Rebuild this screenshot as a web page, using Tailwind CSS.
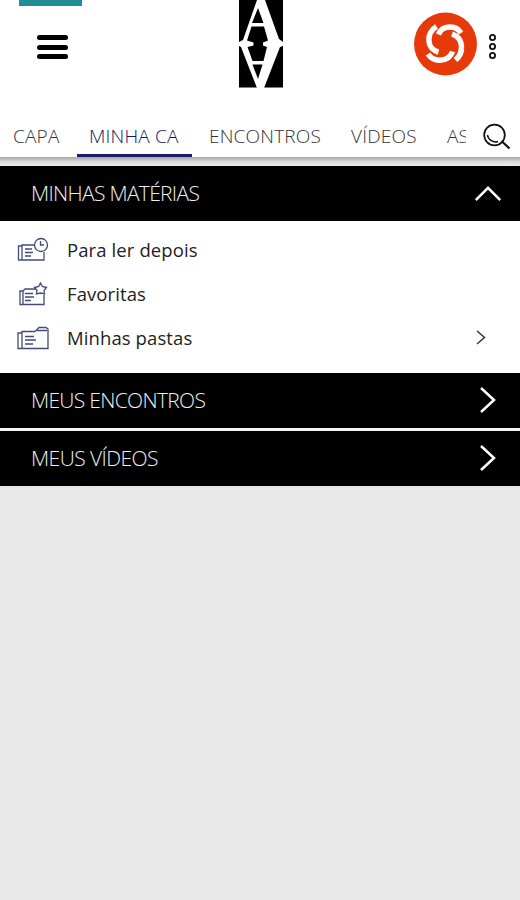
<!DOCTYPE html>
<html lang="pt-BR">
<head>
  <meta charset="UTF-8" />
  <meta name="viewport" content="width=device-width, initial-scale=1.0" />
  <title>Minha CA</title>
  <script src="https://cdn.jsdelivr.net/npm/@tailwindcss/browser@4"></script>
</head>
<body class="bg-[#e8e8e8] h-[900px] overflow-hidden font-['Open_Sans',sans-serif]">

  <!-- Header -->
  <header class="relative h-[110px] bg-white flex items-start">
    <div class="absolute left-[19px] top-0 w-[63px] h-[6px] bg-[#218c94]"></div>
    <button class="mt-[35px] ml-[37px] w-[31px] h-6 flex flex-col justify-between">
      <span class="w-full h-[5px] rounded-full bg-black"></span>
      <span class="w-full h-[5px] rounded-full bg-black"></span>
      <span class="w-full h-[5px] rounded-full bg-black"></span>
    </button>

    <!-- Logo -->
    <svg class="ml-[171px] w-[44px] h-[88px]" viewBox="0 0 44 88">
      <rect width="44" height="87.500" fill="#000" />
      <path fill="#fff" d="M18 0H26L40 39L44 42V46L41 47L25 88H18L2 47L0 46V42L4 40Z" />
      <path fill="#000" d="M19 8L24.500 23H13Z" />
      <path fill="#000" d="M12.500 26.500H25L29 40.500L24 42.500V45.500L28 47L24.500 61H13.500L8.500 47L14.500 45.500V42.500L8 40.500Z" />
      <path fill="#000" d="M13.500 64.500H23.500L19 79Z" />
    </svg>

    <svg class="mt-3 ml-[131px] w-[63px] h-[64px]" viewBox="0 0 63 64">
      <circle cx="31.500" cy="32" r="31.500" fill="#e73a0a" />
      <g fill="none" stroke="#fff" stroke-width="5.500">
        <path d="M24.500 22.500C28 13 42 12.500 47 21" />
        <path d="M38 22C50 26 50 41 41.500 48" />
        <path d="M38.500 39.500C35 50 20 51 14 42" />
        <path d="M24.500 40C12 37 12 21 22.500 14.500" />
      </g>
    </svg>

    <svg class="mt-[33px] ml-[11px] w-[9px] h-[27px]" viewBox="0 0 9 27" fill="none" stroke="#111" stroke-width="1.800">
      <circle cx="4.500" cy="4.500" r="2.600" />
      <circle cx="4.500" cy="13.500" r="2.600" />
      <circle cx="4.500" cy="22.500" r="2.600" />
    </svg>
  </header>

  <!-- Tabs -->
  <nav class="h-[47px] bg-white flex text-[19px] leading-[53px] tracking-[0.2px] font-light text-[#333] whitespace-nowrap">
    <div class="w-[466px] h-[47px] flex overflow-hidden">
      <a class="w-[77px] pl-[13px] shrink-0">CAPA</a>
      <a class="w-[115px] h-[47px] pl-3 shrink-0 text-[#17175c] border-b-[3px] border-[#1c1c68]">MINHA CA</a>
      <a class="w-[142px] pl-[17px] shrink-0">ENCONTROS</a>
      <a class="w-[96px] pl-[17px] shrink-0">VÍDEOS</a>
      <a class="pl-[17px] shrink-0">AS</a>
    </div>
    <svg class="mt-[13px] ml-4 w-[30px] h-[28px]" viewBox="0 0 30 28" fill="none" stroke="#111">
      <circle cx="12.500" cy="12" r="10.300" stroke-width="1.700" />
      <path d="M5.500 12A8 8 0 0 0 16 18.500" stroke-width="1.500" />
      <path d="M19.500 18L27.500 25.500" stroke-width="2.300" />
    </svg>
  </nav>
  <div class="h-[9px] bg-linear-to-b from-[#a5a5a5] via-[#d9d9d9] to-[#eee]"></div>

  <!-- Sections -->
  <section class="bg-white">
    <div class="h-[55px] bg-black flex items-center justify-between pl-[31px] pr-[19px] text-[#eee] font-light text-[21px] tracking-[-0.68px]">
      <span>MINHAS MATÉRIAS</span>
      <svg class="w-[26px] h-[15px]" viewBox="0 0 26 15" fill="none" stroke="#fff" stroke-width="2.500"><path d="M.8 14L13 1.800L25.200 14" /></svg>
    </div>

    <ul class="h-[152px] pt-[7px] text-[18.500px] tracking-[0.1px] text-[#222]">
      <li class="h-11 flex items-center pl-[17px]">
        <svg class="w-[33px] h-[26px] mr-[17px]" viewBox="0 0 33 26" fill="none" stroke="#454b78" stroke-width="1.300">
          <path d="M17 8H5V23H27V15M5 9H1.500V23H5" />
          <path d="M8 12H15M8 15.500H16M8 19H14" />
          <circle cx="24" cy="8" r="6.500" />
          <path d="M23.500 4V8H27" />
        </svg>
        <span>Para ler depois</span>
      </li>
      <li class="h-11 flex items-center pl-[17px]">
        <svg class="w-[33px] h-[26px] mr-[17px]" viewBox="0 0 33 26" fill="none" stroke="#454b78" stroke-width="1.300">
          <path d="M19 8H8L6 10V23.500H27V14M6 10H3V23.500H6" />
          <path d="M8 12.500H16M8 16H17M8 19.500H14" />
          <path d="M23.500 2L25.400 5.500L29.500 6.500L27 9.500L27.500 13L23.500 12L19.500 13L20 9.500L17.500 6.500L21.600 5.500Z" />
        </svg>
        <span>Favoritas</span>
      </li>
      <li class="h-11 flex items-center pl-[17px] pr-[34px]">
        <svg class="w-[33px] h-[26px] mr-[17px]" viewBox="0 0 33 26" fill="none" stroke="#454b78" stroke-width="1.300">
          <path d="M5 6.500H18L22 2.500H29L31 4V23.500H5ZM5 8H1V23.500H5" />
          <path d="M8 11.500H17M8 15H19M8 19H16M20 5.500H30" />
        </svg>
        <span>Minhas pastas</span>
        <svg class="ml-auto -mt-0.5 w-[10px] h-[15px]" viewBox="0 0 10 15" fill="none" stroke="#333" stroke-width="1.500"><path d="M1 1L8.500 7.500L1 14" /></svg>
      </li>
    </ul>
  </section>

  <div class="h-[55px] bg-black flex items-center justify-between pl-[31px] pr-6 text-[#eee] font-light text-[21px] tracking-[-0.68px]">
    <span>MEUS ENCONTROS</span>
    <svg class="-mt-0.5 w-4 h-[26px]" viewBox="0 0 16 26" fill="none" stroke="#fff" stroke-width="2.500"><path d="M1 1L14 13L1 25" /></svg>
  </div>
  <div class="h-[3px] bg-[#f4f4f4]"></div>
  <div class="h-[55px] bg-black flex items-center justify-between pl-[31px] pr-6 text-[#eee] font-light text-[21px] tracking-[-0.55px]">
    <span>MEUS VÍDEOS</span>
    <svg class="-mt-0.5 w-4 h-[26px]" viewBox="0 0 16 26" fill="none" stroke="#fff" stroke-width="2.500"><path d="M1 1L14 13L1 25" /></svg>
  </div>

</body>
</html>
